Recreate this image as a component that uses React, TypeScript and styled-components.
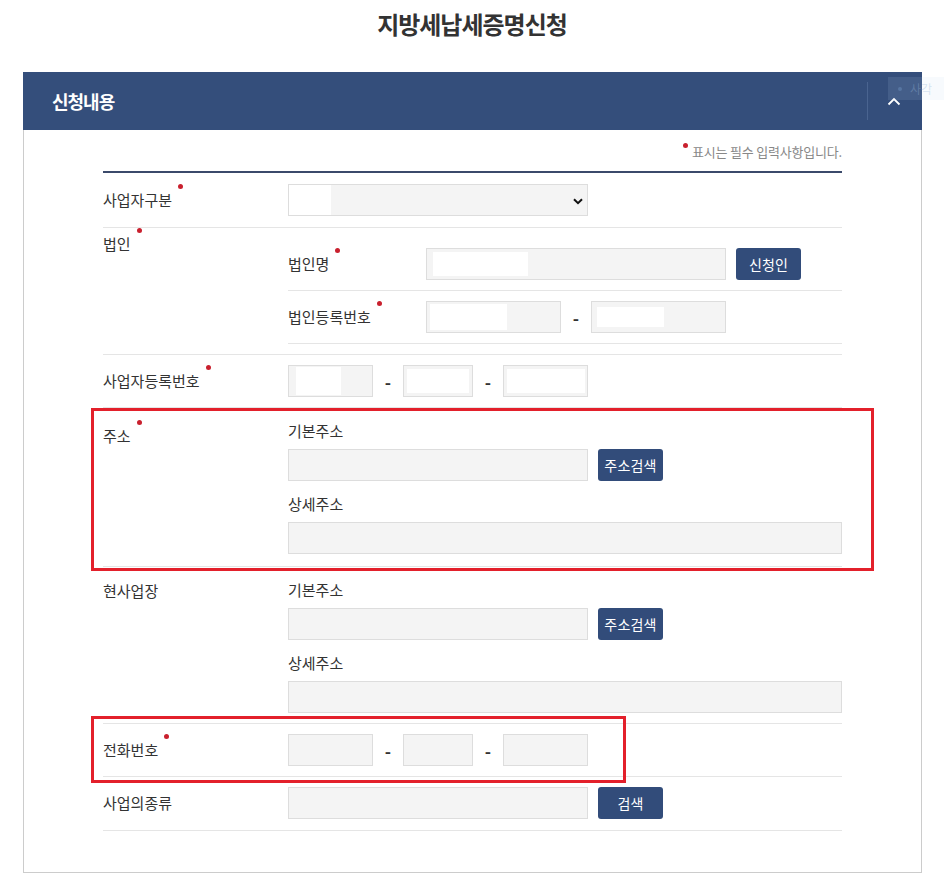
import React from "react";
import styled, { createGlobalStyle } from "styled-components";

const GlobalStyle = createGlobalStyle`
  body {
    margin: 0;
    background: #fff;
    font-family: "Noto Sans CJK KR", "Noto Sans", sans-serif;
    color: #333;
  }
`;

const Page = styled.div`
  position: relative;
  width: 944px;
  padding-top: 10px;
`;

const Title = styled.h1`
  margin: 0 0 34px;
  text-align: center;
  font-size: 24px;
  line-height: 28px;
  font-weight: 700;
  letter-spacing: -1px;
  color: #333;
`;

const Panel = styled.section`
  margin: 0 22px 0 23px;
`;

const PanelHead = styled.div`
  display: flex;
  align-items: center;
  height: 58px;
  background: #344e7b;
  padding-left: 29px;
`;

const PanelTitle = styled.h2`
  flex: 1;
  margin: 0;
  font-size: 18px;
  font-weight: 700;
  letter-spacing: -1px;
  color: #fff;
`;

const Toggle = styled.button`
  display: flex;
  align-items: center;
  justify-content: center;
  width: 55px;
  height: 38px;
  border: 0;
  border-left: 1px solid #4a6490;
  background: transparent;
  padding: 0 2px 0 0;
`;

const FloatTip = styled.div`
  position: absolute;
  top: 77px;
  left: 888px;
  width: 56px;
  height: 23px;
  display: flex;
  align-items: center;
  gap: 8px;
  padding-left: 10px;
  box-sizing: border-box;
  background: rgba(190, 212, 238, 0.12);
  font-size: 12px;
  color: rgba(150, 180, 215, 0.35);
  &::before {
    content: "";
    width: 4px;
    height: 4px;
    border-radius: 50%;
    background: rgba(120, 160, 210, 0.35);
  }
`;

const PanelBody = styled.div`
  border: 1px solid #ccc;
  border-top: 0;
  padding: 13px 79px 41px 79px;
`;

const Note = styled.p`
  margin: 0 0 10px;
  text-align: right;
  font-size: 13px;
  line-height: 18px;
  letter-spacing: -0.2px;
  color: #888;
`;

const Dot = styled.span`
  flex: none;
  width: 5px;
  height: 5px;
  border-radius: 50%;
  background: #c9202e;
  margin: -28px 0 0 6px;
`;

const NoteDot = styled.span`
  display: inline-block;
  vertical-align: top;
  width: 5px;
  height: 5px;
  border-radius: 50%;
  background: #c9202e;
  margin: 0 4px 0 0;
`;

const Form = styled.div`
  border-top: 2px solid #3b4a6b;
`;

const Row = styled.div<{ $box?: string; $pad?: string }>`
  position: relative;
  display: grid;
  grid-template-columns: 185px 1fr;
  padding: ${(p) => p.$pad ?? "10px 0"};
  border-bottom: 1px solid #e5e5e5;
  ${(p) =>
    p.$box &&
    `
    &::after {
      content: "";
      position: absolute;
      inset: ${p.$box};
      border: 3px solid #e3202b;
      pointer-events: none;
    }
  `}
`;

const Label = styled.div<{ $top?: number }>`
  display: flex;
  align-items: ${(p) => (p.$top !== undefined ? "flex-start" : "center")};
  padding-top: ${(p) => p.$top ?? 0}px;
  font-size: 15px;
  color: #333;
`;

const LabelText = styled.span`
  display: inline-flex;
  align-items: center;
  height: 20px;
  line-height: 20px;
`;

const Fields = styled.div`
  display: flex;
  align-items: center;
`;

const Stack = styled.div`
  display: flex;
  flex-direction: column;
`;

const SubRow = styled.div<{ $pad?: string }>`
  display: grid;
  grid-template-columns: 138px 1fr;
  padding: ${(p) => p.$pad ?? "10px 0"};
  border-bottom: 1px solid #e5e5e5;
`;

const SubTitle = styled.div<{ $gap?: number }>`
  font-size: 15px;
  line-height: 20px;
  margin: ${(p) => p.$gap ?? 2}px 0 8px;
  color: #333;
`;

const Input = styled.input<{ $w: number; $mx?: number; $mw?: number; $my?: number }>`
  box-sizing: border-box;
  width: ${(p) => p.$w}px;
  height: 32px;
  border: 1px solid #ddd;
  border-radius: 0;
  padding: 0 8px;
  font: inherit;
  background: ${(p) =>
    p.$mw
      ? `linear-gradient(#fff, #fff) ${p.$mx ?? 0}px ${p.$my ?? 0}px / ${p.$mw}px calc(100% - ${
          2 * (p.$my ?? 0)
        }px) no-repeat, #f4f4f4`
      : "#f4f4f4"};
`;

const Select = styled.select`
  box-sizing: border-box;
  width: 300px;
  height: 32px;
  border: 1px solid #ddd;
  border-radius: 0;
  appearance: none;
  padding: 0 8px;
  font: inherit;
  background:
    url("data:image/svg+xml;utf8,<svg xmlns='http://www.w3.org/2000/svg' width='10' height='7' viewBox='0 0 10 7'><path d='M1 1.2 5 5.2 9 1.2' fill='none' stroke='%23111' stroke-width='2'/></svg>")
      284px 13px no-repeat,
    linear-gradient(#fff, #fff) 0 0 / 42px 100% no-repeat,
    #f4f4f4;
`;

const Dash = styled.span`
  width: 30px;
  text-align: center;
  font-size: 17px;
  font-weight: 700;
  color: #333;
`;

const Button = styled.button`
  width: 65px;
  height: 32px;
  margin-left: 10px;
  padding: 0;
  border: 0;
  border-radius: 3px;
  background: #324c7a;
  color: #fff;
  font-family: inherit;
  font-size: 14px;
  letter-spacing: 0.2px;
`;

const Chevron = () => (
  <svg width="14" height="9" viewBox="0 0 14 9">
    <polyline points="1.5,7.5 7,2 12.5,7.5" fill="none" stroke="#fff" strokeWidth="1.8" />
  </svg>
);

const FieldLabel = ({ text, req }: { text: string; req?: boolean }) => (
  <LabelText>
    {text}
    {req && <Dot />}
  </LabelText>
);

const Address = () => (
  <Stack>
    <SubTitle $gap={3}>기본주소</SubTitle>
    <Fields>
      <Input $w={300} />
      <Button>주소검색</Button>
    </Fields>
    <SubTitle $gap={13}>상세주소</SubTitle>
    <Input $w={554} />
  </Stack>
);

export default function App() {
  return (
    <>
      <GlobalStyle />
      <Page>
        <Title>지방세납세증명신청</Title>
        <Panel>
          <PanelHead>
            <PanelTitle>신청내용</PanelTitle>
            <Toggle aria-label="접기">
              <Chevron />
            </Toggle>
          </PanelHead>
          <PanelBody>
            <Note>
              <NoteDot />
              표시는 필수 입력사항입니다.
            </Note>
            <Form>
              <Row $pad="11px 0">
                <Label>
                  <FieldLabel text="사업자구분" req />
                </Label>
                <Fields>
                  <Select>
                    <option></option>
                  </Select>
                </Fields>
              </Row>

              <Row $pad="0 0 10px">
                <Label $top={6}>
                  <FieldLabel text="법인" req />
                </Label>
                <Stack>
                  <SubRow $pad="20px 0 10px">
                    <Label>
                      <FieldLabel text="법인명" req />
                    </Label>
                    <Fields>
                      <Input $w={300} $mx={6} $mw={95} $my={3} />
                      <Button>신청인</Button>
                    </Fields>
                  </SubRow>
                  <SubRow>
                    <Label>
                      <FieldLabel text="법인등록번호" req />
                    </Label>
                    <Fields>
                      <Input $w={135} $mx={3} $mw={77} $my={2} />
                      <Dash>-</Dash>
                      <Input $w={135} $mx={5} $mw={67} $my={5} />
                    </Fields>
                  </SubRow>
                </Stack>
              </Row>

              <Row>
                <Label>
                  <FieldLabel text="사업자등록번호" req />
                </Label>
                <Fields>
                  <Input $w={85} $mx={7} $mw={45} $my={1} />
                  <Dash>-</Dash>
                  <Input $w={70} $mx={3} $mw={62} $my={3} />
                  <Dash>-</Dash>
                  <Input $w={85} $mx={3} $mw={78} $my={3} />
                </Fields>
              </Row>

              <Row $pad="10px 0 12px" $box="0 -32px -5px -12px">
                <Label $top={8}>
                  <FieldLabel text="주소" req />
                </Label>
                <Address />
              </Row>

              <Row>
                <Label $top={4}>
                  <FieldLabel text="현사업장" />
                </Label>
                <Address />
              </Row>

              <Row $box="-8px 216px -7px -12px">
                <Label>
                  <FieldLabel text="전화번호" req />
                </Label>
                <Fields>
                  <Input $w={85} />
                  <Dash>-</Dash>
                  <Input $w={70} />
                  <Dash>-</Dash>
                  <Input $w={85} />
                </Fields>
              </Row>

              <Row $pad="10px 0 11px">
                <Label>
                  <FieldLabel text="사업의종류" />
                </Label>
                <Fields>
                  <Input $w={300} />
                  <Button>검색</Button>
                </Fields>
              </Row>
            </Form>
          </PanelBody>
        </Panel>
        <FloatTip>사각</FloatTip>
      </Page>
    </>
  );
}
